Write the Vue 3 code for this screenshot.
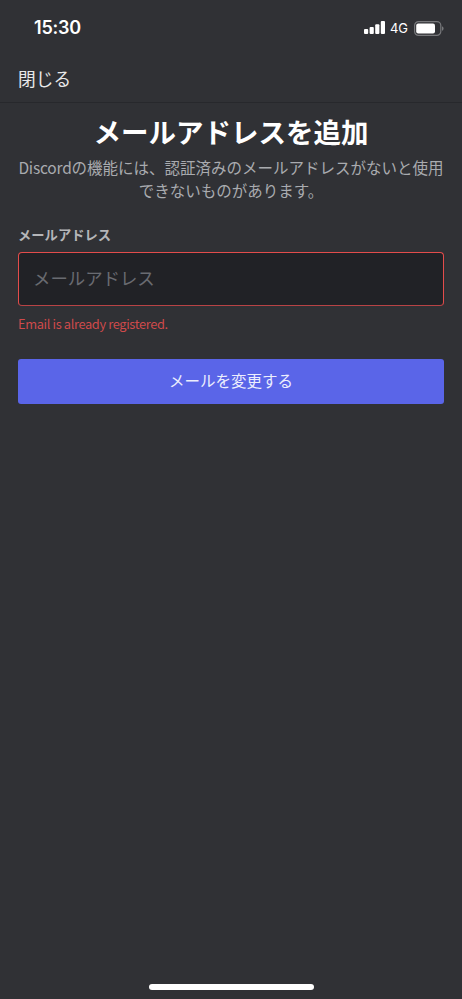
<script setup>
import { ref } from 'vue'

const email = ref('')
const error = ref('Email is already registered.')
</script>

<template>
  <div class="screen">
    <header class="status">
      <span class="time">15:30</span>
      <div class="indicators">
        <svg class="signal" width="21" height="13" viewBox="0 0 21 13" fill="#fff">
          <rect x="0" y="8" width="4.2" height="5" rx="1" />
          <rect x="5.6" y="6" width="4.2" height="7" rx="1" />
          <rect x="11.2" y="3.2" width="4.2" height="9.8" rx="1" />
          <rect x="16.8" y="0" width="4.2" height="13" rx="1" />
        </svg>
        <span class="network">4G</span>
        <svg class="battery" width="30" height="15" viewBox="0 0 30 15">
          <rect x="0.6" y="0.6" width="26.2" height="13.8" rx="4" fill="none" stroke="#77787b" stroke-width="1.2" />
          <rect x="2.2" y="2.4" width="18.8" height="10.2" rx="2" fill="#fff" />
          <path d="M28 5.2c1 .4 1.6 1.3 1.6 2.3s-.6 1.9-1.6 2.3z" fill="#77787b" />
        </svg>
      </div>
    </header>
    <nav class="nav"><a class="close">閉じる</a></nav>
    <main class="content">
      <h1 class="title">メールアドレスを追加</h1>
      <p class="lead"><span class="brand">Discord</span>の機能には、認証済みのメールアドレスがないと使用<br />できないものがあります。</p>
      <label class="label" for="email">メールアドレス</label>
      <input id="email" v-model="email" class="field" type="email" placeholder="メールアドレス" />
      <p class="error">{{ error }}</p>
      <button class="submit" type="button">メールを変更する</button>
    </main>
    <footer class="home"><span class="indicator"></span></footer>
  </div>
</template>

<style>
body {
  margin: 0;
  background: #303135;
}
</style>

<style scoped>
.screen {
  box-sizing: border-box;
  display: flex;
  flex-direction: column;
  width: 100%;
  height: 999px;
  background: #303135;
  color: #fff;
  font-family: "Noto Sans CJK JP", sans-serif;
}
.status {
  box-sizing: border-box;
  display: flex;
  align-items: center;
  justify-content: space-between;
  height: 56px;
  padding: 0 18px 0 34px;
}
.time {
  font: 600 18px/24px Inter, sans-serif;
  letter-spacing: -0.2px;
}
.indicators {
  display: flex;
  align-items: center;
}
.signal {
  margin-top: -1px;
}
.network {
  margin: 0 6px 0 5px;
  font: 400 13px/16px Inter, sans-serif;
}
.nav {
  box-sizing: border-box;
  height: 47px;
  padding: 8px 18px 0;
  border-bottom: 1px solid #27282c;
}
.close {
  display: block;
  font-size: 17.7px;
  font-weight: 400;
  line-height: 28px;
  color: #e8e8e9;
}
.content {
  display: flex;
  flex: 1;
  flex-direction: column;
  padding: 10px 18px 0;
}
.title {
  margin: 0;
  font-size: 27.5px;
  font-weight: 700;
  line-height: 36px;
  text-align: center;
}
.lead {
  margin: 7px -10px 0;
  font-size: 15.5px;
  line-height: 23px;
  text-align: center;
  color: #a9abaf;
}
.brand {
  line-height: 1;
  letter-spacing: -0.2px;
}
.label {
  margin-top: 23px;
  font-size: 13.3px;
  font-weight: 700;
  line-height: 20px;
  color: #b5b6b9;
}
.field {
  box-sizing: border-box;
  width: 100%;
  height: 54px;
  margin: 7px 0 0;
  padding: 0 14px 4px;
  border: 1px solid #e34c4b;
  border-bottom-color: #b84345;
  border-radius: 4px;
  outline: none;
  background: #212226;
  color: #dcddde;
  font-family: inherit;
  font-size: 17.4px;
}
.field::placeholder {
  color: #696b71;
  opacity: 1;
}
.error {
  margin: 9px 0 0;
  font-size: 12.8px;
  line-height: 18px;
  letter-spacing: -0.35px;
  color: #cf4a4b;
}
.submit {
  height: 45px;
  margin: 26px 0 0;
  padding: 0 0 3px;
  border: 0;
  border-radius: 3px;
  background: #5a65e8;
  color: #eceefd;
  font-family: inherit;
  font-size: 15.5px;
  line-height: 24px;
}
.home {
  display: flex;
  justify-content: center;
  padding-bottom: 9px;
}
.indicator {
  width: 165px;
  height: 6px;
  border-radius: 3px;
  background: #fff;
}
</style>
